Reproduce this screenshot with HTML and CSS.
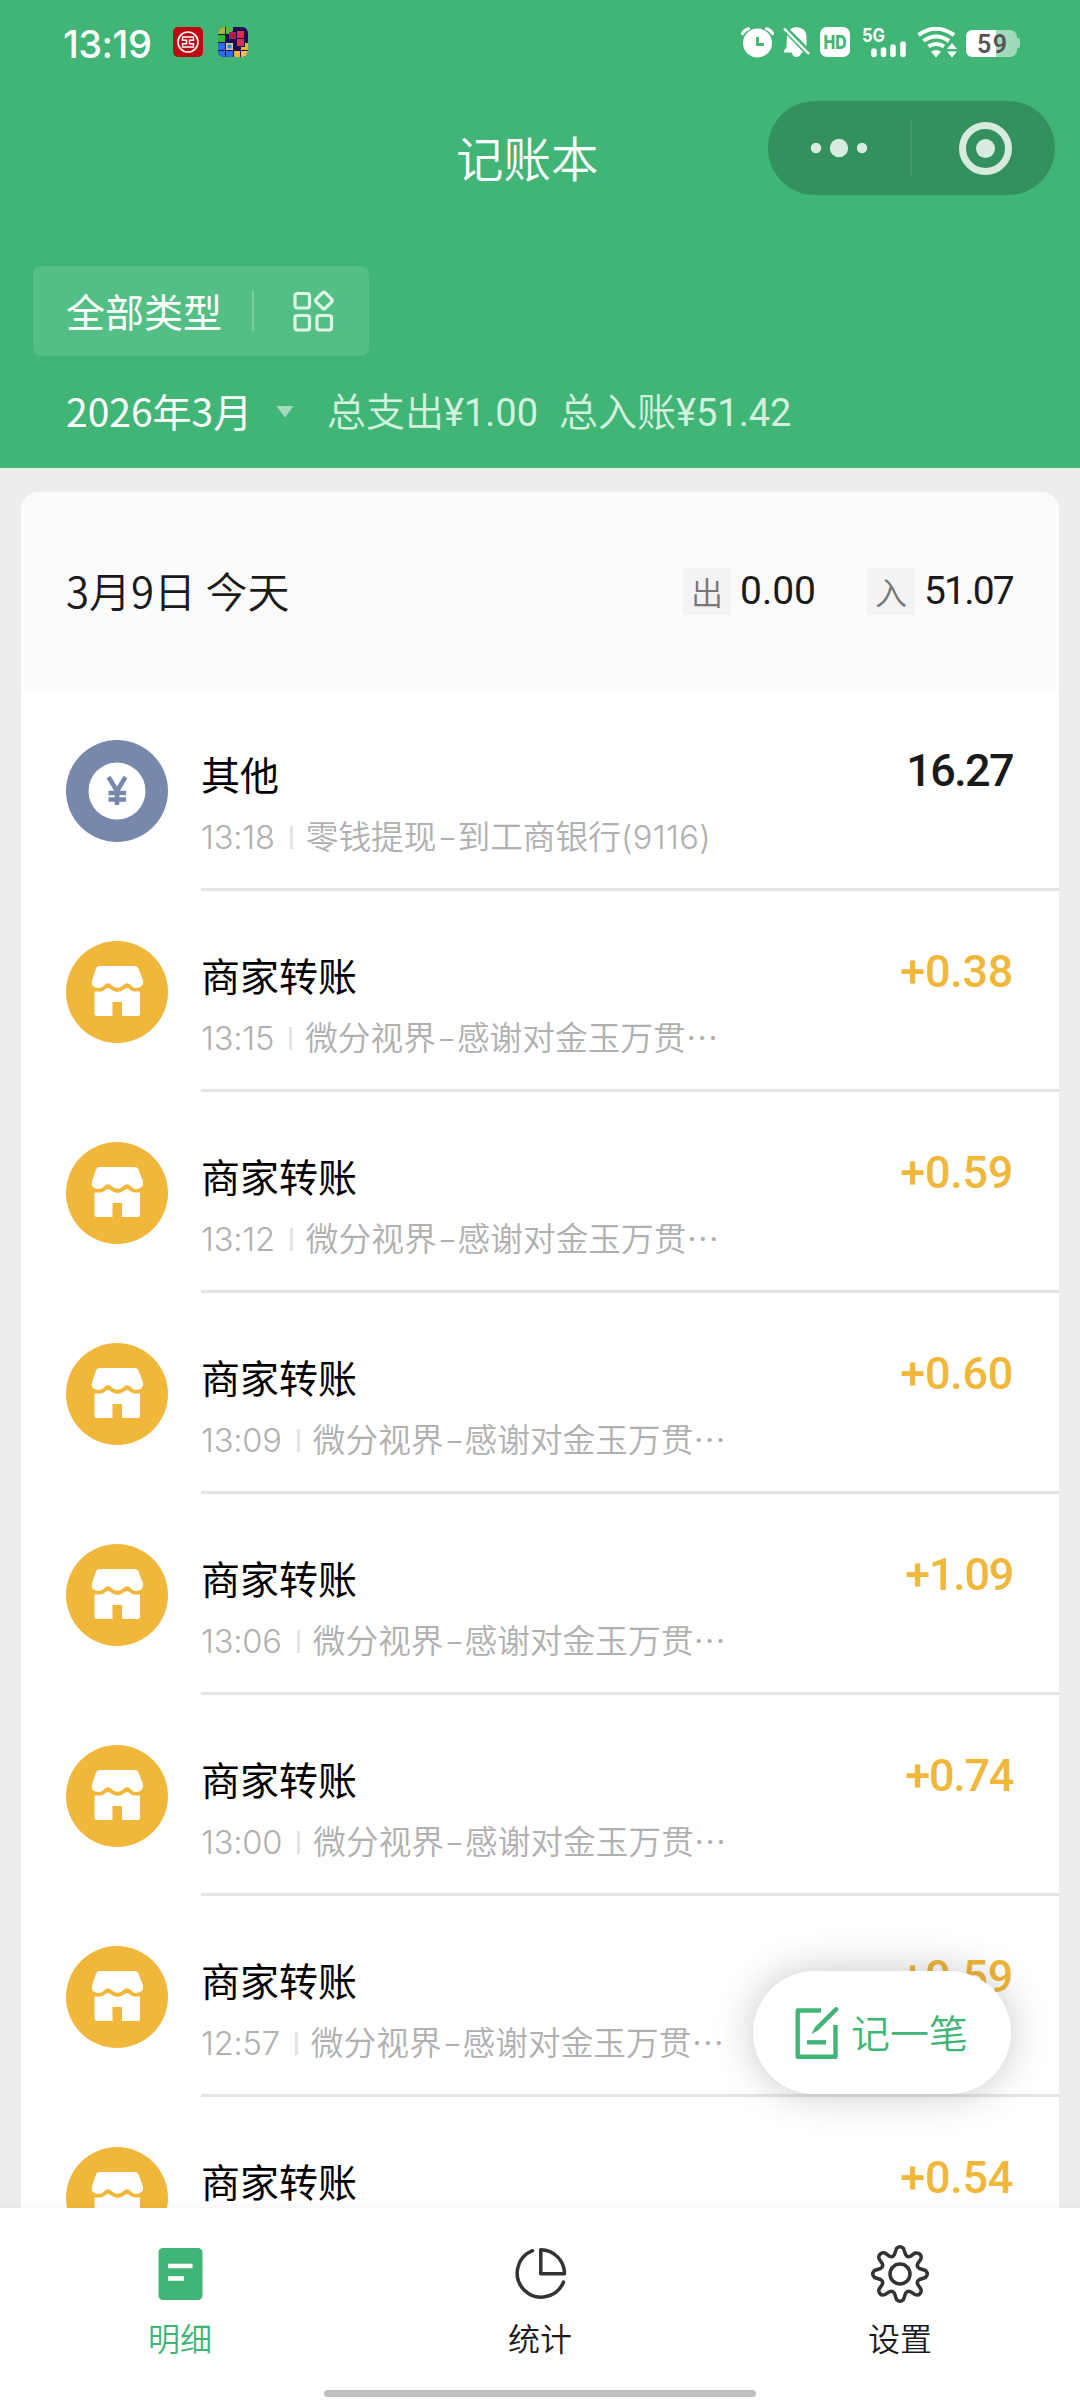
FILE: index.html
```
<!DOCTYPE html>
<html lang="zh-CN">
<head>
<meta charset="utf-8">
<title>记账本</title>
<link rel="stylesheet" href="styles.css">
</head>
<body>
<svg class="defs" width="0" height="0">
  <symbol id="shop" viewBox="0 0 102 102">
    <circle cx="51" cy="51" r="51" fill="#f0b73a"/>
    <path d="M33 25H69Q71.500 25 72.500 27.500L77 39.500Q78 46.500 70 47Q67 47 65 44.500Q61 40 57 44.500Q51.500 49 46 44.500Q42 40 38 44.500Q36 47 32 47Q24.500 46.500 26 39.500L30 27.500Q30.800 25 33 25Z" fill="#fff"/>
    <path d="M28.500 50.500H35Q38 50 40 47.800Q42 46 44 47.800Q51.500 54 59 47.800Q61 46 63 47.800Q65 50 68 50.500H74V72.500Q74 75 71.500 75H56V61H46.500V75H31Q28.500 75 28.500 72.500Z" fill="#fff"/>
  </symbol>
</svg>
<div class="screen">
  <header class="header">
    <div class="status">
      <div class="status-left">
        <span class="clock">13:19</span>
        <svg width="30" height="30" viewBox="0 0 30 30">
          <rect width="30" height="30" rx="5" fill="#bd0a12"/>
          <circle cx="15" cy="15" r="10" fill="none" stroke="#fff" stroke-width="1.6"/>
          <path d="M9.500 10H20.500V13.200H16.500V16.800H20.500V20H9.500V16.800H13.500V13.200H9.500Z" fill="none" stroke="#fff" stroke-width="1.500"/>
        </svg>
        <svg class="blocks" width="30" height="30" viewBox="0 0 30 30">
          <rect width="30" height="30" fill="#1b0b57"/>
          <path d="M0 0H7V7H0Z" fill="#a6b93f"/><path d="M8 0H15V4L11 7H8Z" fill="#52bd3c"/><path d="M0 8H7V15H0Z" fill="#35b82e"/>
          <path d="M11 5H18V12H11Z" fill="#b51f3d"/><path d="M19 4H26V11H19ZM19 12H26V19H19Z" fill="#d93243"/>
          <path d="M0 16H7V23H0ZM0 24H7V30H0ZM8 24H15V30H8Z" fill="#2b6ce8"/><path d="M8 16H15V23H8Z" fill="#e0c795"/><circle cx="11.500" cy="19.500" r="2.200" fill="#2492cf"/>
          <path d="M16 24H22V30H16ZM27 16H30V23H23V20H27Z" fill="#f5b729"/><path d="M23 24H30V30H23Z" fill="#e8bb60"/>
        </svg>
      </div>
      <div class="status-right">
        <svg width="33" height="31" viewBox="741 27 33 31" fill="none">
          <circle cx="757.500" cy="43" r="14.500" fill="#fff"/>
          <path d="M742.500 33.500Q744.500 29.800 748.500 28.800M766.500 28.800Q770.500 29.800 772.500 33.500" stroke="#fff" stroke-width="3.200" stroke-linecap="round"/>
          <path d="M757.500 37V44.500H764" stroke="#40b576" stroke-width="2.800"/>
        </svg>
        <svg width="28" height="31" viewBox="783 27 28 31">
          <path d="M787 35L803.500 52.500H801.500Q800 57 796.500 57T791.500 52.500H784V50.500L786.500 47.500ZM790 29.500Q793 27 796.500 27Q806.500 28 806.500 37V46Z" fill="#fff"/>
          <path d="M784 28.500L809 54" stroke="#fff" stroke-width="2.400"/>
        </svg>
        <svg width="30" height="31" viewBox="0 0 30 31">
          <rect width="30" height="30" rx="7" fill="#fff"/>
          <text x="15" y="22" text-anchor="middle" class="hd" textLength="23" lengthAdjust="spacingAndGlyphs">HD</text>
        </svg>
        <svg class="signal" width="45" height="31" viewBox="861 27 45 31">
          <text x="861" y="41.500" class="net" textLength="23" lengthAdjust="spacingAndGlyphs">5G</text>
          <path d="M873 51V54.500M882.500 50V54.500M892 47V54.500M902 44V54.500" stroke="#fff" stroke-width="5.600" stroke-linecap="round"/>
        </svg>
        <svg width="40" height="31" viewBox="917 27 40 31" fill="none">
          <path d="M918.500 35Q936 22.500 954 35M923.500 41Q936 32 949 41M928.500 46.500Q936 41.500 944 46.500" stroke="#fff" stroke-width="4"/>
          <path d="M931 51.500Q936 48.500 941 51.500L936 57.500Z" fill="#fff"/>
          <path d="M952 43L957 49H947ZM952 57.500L957 51.500H947Z" fill="#fff"/>
        </svg>
        <svg width="54" height="31" viewBox="0 0 54 31">
          <rect y="3" width="51" height="27" rx="7" fill="#a0daba"/>
          <path d="M30 3H7Q0 3 0 10V23Q0 30 7 30H30Z" fill="#fff"/>
          <path d="M51 11H52Q54 11 54 13V19Q54 21 52 21H51Z" fill="#a0daba"/>
          <text x="26" y="25.500" text-anchor="middle" class="pct" textLength="30">59</text>
        </svg>
      </div>
    </div>
    <div class="navbar">
      <h1 class="title">记账本</h1>
      <div class="capsule">
        <svg width="287" height="94" viewBox="768 101 287 94">
          <g fill="#d8ebdf"><circle cx="816" cy="148" r="5.200"/><circle cx="839" cy="148" r="9.200"/><circle cx="862" cy="148" r="5.200"/><circle cx="985.500" cy="148.500" r="9.500"/></g>
          <circle cx="985.500" cy="148.500" r="23" fill="none" stroke="#d8ebdf" stroke-width="7"/>
          <path d="M911.500 120V176" stroke="#459b6b" stroke-width="1.500"/>
        </svg>
      </div>
    </div>
    <div class="filter">
      <span>全部类型</span><i class="filter-line"></i>
      <svg width="42" height="42" viewBox="0 0 42 42" fill="none" stroke="#dff5e8" stroke-width="3.200">
        <rect x="2" y="3.500" width="14.500" height="14.500" rx="2.500"/><rect x="2" y="25.500" width="14.500" height="14.500" rx="2.500"/><rect x="24" y="25.500" width="14.500" height="14.500" rx="2.500"/>
        <rect x="24.500" y="4.200" width="12.800" height="12.800" rx="2" transform="rotate(45 30.900 10.600)"/>
      </svg>
    </div>
    <div class="summary">
      <span class="month">2026年3月</span><i class="caret"></i>
      <span class="sum out">总支出<b>¥1.00</b></span><span class="sum in">总入账<b>¥51.42</b></span>
    </div>
  </header>

  <main class="list">
    <section class="card">
      <div class="day">
        <span class="date">3月9日 今天</span>
        <span class="tag">出</span><span class="tot tot-out">0.00</span>
        <span class="tag">入</span><span class="tot tot-in">51.07</span>
      </div>
      <div class="row">
        <svg class="ico" viewBox="0 0 102 102"><circle cx="51" cy="51" r="51" fill="#7888ac"/><circle cx="51" cy="51" r="28.500" fill="#fff"/><path d="M42.500 37L51 51L59.500 37M51 50V65M42.500 53H60M42.500 59.500H60" fill="none" stroke="#7888ac" stroke-width="4.600"/></svg>
        <div class="body"><div class="info"><div class="name">其他</div><div class="sub"><span class="time">13:18</span><i></i><span class="note">零钱提现<b>-</b>到工商银行<span class="num">(9116)</span></span></div></div><div class="amt spend">16.27</div></div>
      </div>
      <div class="row">
        <svg class="ico"><use href="#shop"/></svg>
        <div class="body"><div class="info"><div class="name">商家转账</div><div class="sub"><span class="time">13:15</span><i></i><span class="note">微分视界<b>-</b>感谢对金玉万贯…</span></div></div><div class="amt">+0.38</div></div>
      </div>
      <div class="row">
        <svg class="ico"><use href="#shop"/></svg>
        <div class="body"><div class="info"><div class="name">商家转账</div><div class="sub"><span class="time">13:12</span><i></i><span class="note">微分视界<b>-</b>感谢对金玉万贯…</span></div></div><div class="amt">+0.59</div></div>
      </div>
      <div class="row">
        <svg class="ico"><use href="#shop"/></svg>
        <div class="body"><div class="info"><div class="name">商家转账</div><div class="sub"><span class="time">13:09</span><i></i><span class="note">微分视界<b>-</b>感谢对金玉万贯…</span></div></div><div class="amt">+0.60</div></div>
      </div>
      <div class="row">
        <svg class="ico"><use href="#shop"/></svg>
        <div class="body"><div class="info"><div class="name">商家转账</div><div class="sub"><span class="time">13:06</span><i></i><span class="note">微分视界<b>-</b>感谢对金玉万贯…</span></div></div><div class="amt narrow">+1.09</div></div>
      </div>
      <div class="row">
        <svg class="ico"><use href="#shop"/></svg>
        <div class="body"><div class="info"><div class="name">商家转账</div><div class="sub"><span class="time">13:00</span><i></i><span class="note">微分视界<b>-</b>感谢对金玉万贯…</span></div></div><div class="amt narrow">+0.74</div></div>
      </div>
      <div class="row">
        <svg class="ico"><use href="#shop"/></svg>
        <div class="body"><div class="info"><div class="name">商家转账</div><div class="sub"><span class="time">12:57</span><i></i><span class="note">微分视界<b>-</b>感谢对金玉万贯…</span></div></div><div class="amt">+0.59</div></div>
      </div>
      <div class="row">
        <svg class="ico"><use href="#shop"/></svg>
        <div class="body"><div class="info"><div class="name">商家转账</div></div><div class="amt">+0.54</div></div>
      </div>
    </section>
  </main>

  <button class="fab">
    <svg width="45" height="54" viewBox="0 0 45 54" fill="none" stroke="#40b576" stroke-width="4.400" stroke-linejoin="round">
      <path d="M26 4.500H2.700V50.700H40.500V19"/><path d="M12 36.300H31"/><path d="M16.500 28L20 21L39.500 1.800Q42 0 43.300 2.500Q43.800 4 42.500 5L23 24.500Z" fill="#40b576" stroke="none"/>
    </svg>
    <span>记一笔</span>
  </button>

  <nav class="tabs">
    <div class="tab on">
      <svg width="60" height="60" viewBox="0 0 60 60"><rect x="8.500" y="4" width="44" height="52" rx="4.500" fill="#40b576"/><path d="M18 22H42.500M18 34.500H34" stroke="#fff" stroke-width="4.400"/></svg>
      <span>明细</span>
    </div>
    <div class="tab">
      <svg width="60" height="60" viewBox="0 0 60 60" fill="none" stroke="#333" stroke-width="3.500" stroke-linejoin="round" stroke-linecap="round"><path d="M22.500 6.700A24 24 0 1 0 53.500 38"/><path d="M30.800 5.700A24 24 0 0 1 54.500 29.800H30.800Z"/></svg>
      <span>统计</span>
    </div>
    <div class="tab">
      <svg width="60" height="60" viewBox="-30 -30 60 60" fill="none" stroke="#333" stroke-width="3.500" stroke-linejoin="round"><circle r="10"/>
        <path d="M-3.500 -25.500Q0 -29 3.500 -25.500L5.500 -19.500Q7.500 -16.200 10.500 -17.800L15 -21Q18.500 -21.500 20.200 -19.500Q22 -17 20.500 -14.500L17.800 -10.500Q16.200 -7.500 19.500 -5.500L25.500 -3.500Q29 0 25.500 3.500L19.500 5.500Q16.200 7.500 17.800 10.500L20.500 14.500Q22 17 20.200 19.500Q18 22 15 20.500L10.500 17.800Q7.500 16.200 5.500 19.500L3.500 25.500Q0 29 -3.500 25.500L-5.500 19.500Q-7.500 16.200 -10.500 17.800L-15 20.500Q-18 22 -20.200 19.500Q-22 17 -20.500 14.500L-17.800 10.500Q-16.200 7.500 -19.500 5.500L-25.500 3.500Q-29 0 -25.500 -3.500L-19.500 -5.500Q-16.200 -7.500 -17.800 -10.500L-20.500 -14.500Q-22 -17 -20.200 -19.500Q-18 -22 -15 -21L-10.500 -17.800Q-7.500 -16.200 -5.500 -19.500Z"/></svg>
      <span>设置</span>
    </div>
    <i class="homebar"></i>
  </nav>
</div>
</body>
</html>
```
FILE: styles.css
```
* { box-sizing: border-box; }
body { margin: 0; font-family: "Noto Sans CJK SC", sans-serif; font-weight: 350; background: #ededed; }
i, b { font-style: normal; font-weight: inherit; }
svg { display: block; flex: none; }
.defs { position: absolute; }
.screen { position: relative; width: 1080px; height: 2400px; overflow: hidden; display: flex; flex-direction: column; }

.header { height: 468px; flex: none; background: #40b576; color: #fff; }
.status { height: 84px; padding: 27px 60px 0 63px; display: flex; justify-content: space-between; align-items: flex-start; }
.status-left { display: flex; }
.status-left svg + svg { margin-left: 15px; }
.clock { width: 110px; font: 500 38px/34px Inter, sans-serif; letter-spacing: -.5px; }
.blocks { border-radius: 6px; }
.status-right { display: flex; }
.status-right svg { margin-left: 9px; }
.status-right .signal { margin-left: 12px; overflow: visible; }
.status-right .signal + svg { margin-left: 10px; }
.hd { font: 800 19px Inter, sans-serif; fill: #40b576; }
.net { font: 700 19px Inter, sans-serif; fill: #fff; }
.pct { font: 600 25px Roboto, sans-serif; fill: #555; }

.navbar { height: 182px; padding: 17px 25px 0 456px; display: flex; justify-content: space-between; }
.title { margin: 21px 0 0; font-size: 47.5px; line-height: 70px; font-weight: 350; height: 70px; }
.capsule { width: 287px; height: 94px; border-radius: 47px; background: #34915e; }

.filter { width: 336px; height: 90px; margin-left: 33px; padding-left: 33px; border-radius: 8px; background: #53bf84; display: flex; align-items: center; font-size: 39px; }
.filter span { padding-bottom: 3px; font-weight: 400; }
.filter-line { width: 2px; height: 40px; margin: 0 39px 0 30px; background: #7dcfa2; }
.summary { display: flex; align-items: center; height: 54px; margin: 27px 0 0 66px; font-size: 39px; }
.month { width: 210px; font-weight: 400; }
.caret { width: 18px; height: 12px; margin: 3px 33px 0 0; background: #a5dcbe; clip-path: polygon(0 0, 100% 0, 50% 100%); }
.sum { color: #d3f1df; white-space: nowrap; padding-bottom: 2px; }
.sum b { font: 400 38px Roboto, sans-serif; }
.out { width: 232px; }

.list { flex: 1; min-height: 0; overflow: hidden; padding: 24px 21px 0; }
.card { background: #fff; border-radius: 18px; overflow: hidden; }
.day { height: 198px; padding: 0 46px 0 45px; background: #fbfbfb; display: flex; align-items: center; color: #1a1a1a; font-size: 42px; }
.date { flex: 1; padding-bottom: 3px; }
.tag { width: 48px; height: 47px; background: #f3f3f3; color: #777; font-size: 32px; line-height: 46px; text-align: center; }
.tot { font: 400 39px/50px Roboto, sans-serif; margin-left: 9px; white-space: nowrap; }
.tot-out { width: 75px; margin-right: 52px; }
.tot-in { width: 89px; letter-spacing: -1.8px; }
.row { height: 201px; padding-left: 45px; display: flex; }
.ico { width: 102px; height: 102px; margin: 50px 33px 0 0; }
.body { flex: 1; display: flex; justify-content: space-between; padding-right: 46px; border-bottom: 3px solid #e4e4e4; }
.name { margin-top: 54px; font-size: 39px; line-height: 58px; color: #000; font-weight: 400; }
.sub { display: flex; align-items: center; height: 46px; margin-top: 12px; color: #b0b0b0; font-size: 32.7px; white-space: nowrap; }
.sub i { width: 3px; height: 23px; background: #e5e5e5; margin: 0 13px 0 15px; }
.time, .num { font-family: Inter, sans-serif; font-weight: 300; letter-spacing: -.2px; }
.num { letter-spacing: .4px; }
.note { padding-bottom: 5px; }
.note b { display: inline-block; width: 21px; text-align: center; font-family: Inter, sans-serif; transform: scaleX(1.35); }
.amt { margin-top: 54px; font: 500 45px/54px Roboto, sans-serif; letter-spacing: -.3px; color: #f0b73a; }
.narrow { letter-spacing: -1.3px; }
.spend { color: #1a1a1a; letter-spacing: -1.6px; }

.fab { position: absolute; left: 753px; top: 1971px; width: 258px; height: 123px; border: 0; border-radius: 62px; background: #fff; box-shadow: 0 0 40px rgba(0,0,0,.22); color: #40b576; display: flex; align-items: center; padding: 0 0 0 42px; gap: 11px; font: 350 39px "Noto Sans CJK SC", sans-serif; }
.fab span { padding-bottom: 3px; }
.tabs { position: relative; height: 192px; flex: none; background: #fff; display: flex; box-shadow: 0 0 12px rgba(0,0,0,.05); }
.tab { flex: 1; display: flex; flex-direction: column; align-items: center; padding-top: 36px; font-size: 32px; line-height: 48px; color: #1a1a1a; }
.tab span { margin-top: 9px; }
.on { color: #40b576; }
.homebar { position: absolute; left: 324px; bottom: 3px; width: 432px; height: 7px; border-radius: 4px; background: #bfbfbf; }
```
